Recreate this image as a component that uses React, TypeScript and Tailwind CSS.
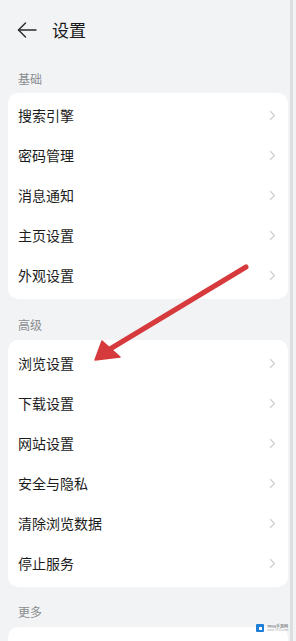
import React from "react";

const font = { fontFamily: '"Noto Sans CJK SC", "Noto Sans", sans-serif' };

function Chevron() {
  return (
    <svg width="7" height="11" viewBox="0 0 7 11" className="shrink-0">
      <polyline points="1.5,1.5 5.5,5.5 1.5,9.5" fill="none" stroke="#cdcfd2" strokeWidth="1.2" strokeLinecap="round" strokeLinejoin="round" />
    </svg>
  );
}

function Row({ label }: { label: string }) {
  return (
    <div className="h-10 flex items-center justify-between pl-[10px] pr-[12px]">
      <span className="text-[14px] leading-[20px] text-[#1c1c1c]">{label}</span>
      <Chevron />
    </div>
  );
}

function Card({ items, cls }: { items: string[]; cls: string }) {
  return (
    <div className={"mx-2 bg-white rounded-[10px] " + cls}>
      {items.map((t) => (
        <Row key={t} label={t} />
      ))}
    </div>
  );
}

export default function App() {
  return (
    <div className="relative w-[296px] h-[641px] overflow-hidden bg-[#f1f3f5]" style={font}>
      <div className="h-[60px] flex items-center pl-[17px]">
        <svg width="20" height="18" viewBox="0 0 20 18">
          <line x1="1.5" y1="9" x2="19" y2="9" stroke="#2a2a2a" strokeWidth="1.4" strokeLinecap="round" />
          <polyline points="8.5,2 1.5,9 8.5,16" fill="none" stroke="#2a2a2a" strokeWidth="1.4" strokeLinecap="round" strokeLinejoin="round" />
        </svg>
        <span className="ml-[15px] text-[17px] leading-[24px] text-[#1a1a1a]">设置</span>
      </div>

      <div className="pt-[11px] pb-[6px] pl-[18px] text-[12px] leading-[16px] text-[#8a8c8f]">基础</div>
      <Card items={["搜索引擎", "密码管理", "消息通知", "主页设置", "外观设置"]} cls="pt-[2px] pb-[4px]" />

      <div className="pt-[18px] pb-[7px] pl-[18px] text-[12px] leading-[16px] text-[#8a8c8f]">高级</div>
      <Card items={["浏览设置", "下载设置", "网站设置", "安全与隐私", "清除浏览数据", "停止服务"]} cls="pt-[3px] pb-[4px]" />

      <div className="pt-[17px] pb-[7px] pl-[18px] text-[12px] leading-[16px] text-[#8a8c8f]">更多</div>
      <div className="mx-2 bg-white rounded-t-[10px] h-[40px]" />

      {/* right edge stripe */}
      <div className="absolute top-0 right-[3px] w-[3px] h-full bg-[#dcdee0]" />

      {/* red arrow */}
      <svg className="absolute left-0 top-0 pointer-events-none" width="296" height="641" viewBox="0 0 296 641">
        <line x1="246" y1="267" x2="110" y2="349" stroke="#d63a3c" strokeWidth="5" strokeLinecap="round" />
        <polygon points="95,360 102,341 120,357" fill="#d63a3c" stroke="#d63a3c" strokeWidth="1.5" strokeLinejoin="round" />
      </svg>

      {/* watermark */}
      <div className="absolute left-[256px] top-[624px] flex items-center gap-[3px]">
        <div className="w-[8px] h-[8px] bg-[#1f7fd6] rounded-[1px] flex items-center justify-center">
          <div className="w-[3px] h-[3px] bg-white" />
        </div>
        <div className="flex flex-col">
          <span className="text-[4px] leading-[5px] text-[#555]">7958手游网</span>
          <span className="text-[3px] leading-[3px] text-[#aaa]">www.7958.com</span>
        </div>
      </div>
    </div>
  );
}
